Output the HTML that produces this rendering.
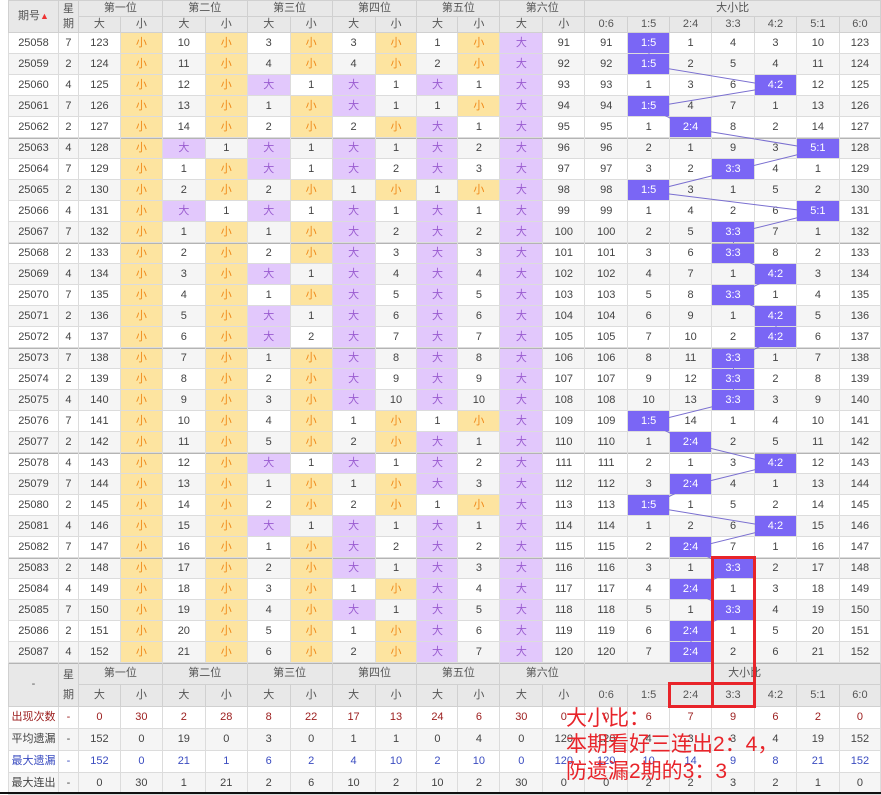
<!DOCTYPE html>
<html><head><meta charset="utf-8"><style>
*{box-sizing:border-box}
body{margin:0;background:#fff;width:881px;height:794px;overflow:hidden;position:relative;font-family:"Liberation Sans","Noto Sans CJK SC",sans-serif}
table{position:absolute;left:8px;top:0;border-collapse:collapse;table-layout:fixed;font-size:11px;color:#444}
td{border:1px solid #dcdcdc;text-align:center;padding:0;white-space:nowrap;overflow:hidden;line-height:13px}
tr{height:21px}
tr.g td{background:#f5f5f5}
thead td,.fh td{background:#e8e8e8;color:#555;border-color:#d0d0d0}
tr.h1{height:16px}tr.h2{height:16px}
tr.k td{box-shadow:inset 0 1px 0 #b4b4b4}
td.s{background:#fde4a0!important;color:#f08a1a}
td.b{background:#e2c8fc!important;color:#9a5cd0}
td.h{background:#7a66f5!important;color:#fff;position:relative;z-index:2}
.r1 td{color:#9b1c1c}
.r3 td{color:#3a4cc0}
.fh tr{height:22px}
svg{position:absolute;left:0;top:0;z-index:1}
.red{position:absolute;background:#e8242a;z-index:3}
.note{position:absolute;left:566px;color:#e8242a;font-size:21px;z-index:4;line-height:26px;font-family:"Liberation Sans","Noto Sans CJK SC",sans-serif}
.bar{position:absolute;left:0;top:792px;width:881px;height:2px;background:#111}
</style></head><body>
<table>
<colgroup><col style="width:50px"><col style="width:20px"><col style="width:42px"><col style="width:42px"><col style="width:43px"><col style="width:42px"><col style="width:43px"><col style="width:42px"><col style="width:43px"><col style="width:42px"><col style="width:41px"><col style="width:42px"><col style="width:43px"><col style="width:42px"><col style="width:43px"><col style="width:42px"><col style="width:42px"><col style="width:43px"><col style="width:42px"><col style="width:43px"><col style="width:41px"></colgroup>
<thead>
<tr class="h1"><td rowspan="2">期号<span style="color:#e33;font-size:9px">▲</span></td><td rowspan="2" style="line-height:15px">星<br>期</td><td colspan="2">第一位</td><td colspan="2">第二位</td><td colspan="2">第三位</td><td colspan="2">第四位</td><td colspan="2">第五位</td><td colspan="2">第六位</td><td colspan="7">大小比</td></tr>
<tr class="h2"><td>大</td><td>小</td><td>大</td><td>小</td><td>大</td><td>小</td><td>大</td><td>小</td><td>大</td><td>小</td><td>大</td><td>小</td><td>0:6</td><td>1:5</td><td>2:4</td><td>3:3</td><td>4:2</td><td>5:1</td><td>6:0</td></tr>
</thead>
<tbody>
<tr><td>25058</td><td>7</td><td>123</td><td class="s">小</td><td>10</td><td class="s">小</td><td>3</td><td class="s">小</td><td>3</td><td class="s">小</td><td>1</td><td class="s">小</td><td class="b">大</td><td>91</td><td>91</td><td class="h">1:5</td><td>1</td><td>4</td><td>3</td><td>10</td><td>123</td></tr>
<tr class="g"><td>25059</td><td>2</td><td>124</td><td class="s">小</td><td>11</td><td class="s">小</td><td>4</td><td class="s">小</td><td>4</td><td class="s">小</td><td>2</td><td class="s">小</td><td class="b">大</td><td>92</td><td>92</td><td class="h">1:5</td><td>2</td><td>5</td><td>4</td><td>11</td><td>124</td></tr>
<tr><td>25060</td><td>4</td><td>125</td><td class="s">小</td><td>12</td><td class="s">小</td><td class="b">大</td><td>1</td><td class="b">大</td><td>1</td><td class="b">大</td><td>1</td><td class="b">大</td><td>93</td><td>93</td><td>1</td><td>3</td><td>6</td><td class="h">4:2</td><td>12</td><td>125</td></tr>
<tr class="g"><td>25061</td><td>7</td><td>126</td><td class="s">小</td><td>13</td><td class="s">小</td><td>1</td><td class="s">小</td><td class="b">大</td><td>1</td><td>1</td><td class="s">小</td><td class="b">大</td><td>94</td><td>94</td><td class="h">1:5</td><td>4</td><td>7</td><td>1</td><td>13</td><td>126</td></tr>
<tr><td>25062</td><td>2</td><td>127</td><td class="s">小</td><td>14</td><td class="s">小</td><td>2</td><td class="s">小</td><td>2</td><td class="s">小</td><td class="b">大</td><td>1</td><td class="b">大</td><td>95</td><td>95</td><td>1</td><td class="h">2:4</td><td>8</td><td>2</td><td>14</td><td>127</td></tr>
<tr class="g k"><td>25063</td><td>4</td><td>128</td><td class="s">小</td><td class="b">大</td><td>1</td><td class="b">大</td><td>1</td><td class="b">大</td><td>1</td><td class="b">大</td><td>2</td><td class="b">大</td><td>96</td><td>96</td><td>2</td><td>1</td><td>9</td><td>3</td><td class="h">5:1</td><td>128</td></tr>
<tr><td>25064</td><td>7</td><td>129</td><td class="s">小</td><td>1</td><td class="s">小</td><td class="b">大</td><td>1</td><td class="b">大</td><td>2</td><td class="b">大</td><td>3</td><td class="b">大</td><td>97</td><td>97</td><td>3</td><td>2</td><td class="h">3:3</td><td>4</td><td>1</td><td>129</td></tr>
<tr class="g"><td>25065</td><td>2</td><td>130</td><td class="s">小</td><td>2</td><td class="s">小</td><td>2</td><td class="s">小</td><td>1</td><td class="s">小</td><td>1</td><td class="s">小</td><td class="b">大</td><td>98</td><td>98</td><td class="h">1:5</td><td>3</td><td>1</td><td>5</td><td>2</td><td>130</td></tr>
<tr><td>25066</td><td>4</td><td>131</td><td class="s">小</td><td class="b">大</td><td>1</td><td class="b">大</td><td>1</td><td class="b">大</td><td>1</td><td class="b">大</td><td>1</td><td class="b">大</td><td>99</td><td>99</td><td>1</td><td>4</td><td>2</td><td>6</td><td class="h">5:1</td><td>131</td></tr>
<tr class="g"><td>25067</td><td>7</td><td>132</td><td class="s">小</td><td>1</td><td class="s">小</td><td>1</td><td class="s">小</td><td class="b">大</td><td>2</td><td class="b">大</td><td>2</td><td class="b">大</td><td>100</td><td>100</td><td>2</td><td>5</td><td class="h">3:3</td><td>7</td><td>1</td><td>132</td></tr>
<tr class="k"><td>25068</td><td>2</td><td>133</td><td class="s">小</td><td>2</td><td class="s">小</td><td>2</td><td class="s">小</td><td class="b">大</td><td>3</td><td class="b">大</td><td>3</td><td class="b">大</td><td>101</td><td>101</td><td>3</td><td>6</td><td class="h">3:3</td><td>8</td><td>2</td><td>133</td></tr>
<tr class="g"><td>25069</td><td>4</td><td>134</td><td class="s">小</td><td>3</td><td class="s">小</td><td class="b">大</td><td>1</td><td class="b">大</td><td>4</td><td class="b">大</td><td>4</td><td class="b">大</td><td>102</td><td>102</td><td>4</td><td>7</td><td>1</td><td class="h">4:2</td><td>3</td><td>134</td></tr>
<tr><td>25070</td><td>7</td><td>135</td><td class="s">小</td><td>4</td><td class="s">小</td><td>1</td><td class="s">小</td><td class="b">大</td><td>5</td><td class="b">大</td><td>5</td><td class="b">大</td><td>103</td><td>103</td><td>5</td><td>8</td><td class="h">3:3</td><td>1</td><td>4</td><td>135</td></tr>
<tr class="g"><td>25071</td><td>2</td><td>136</td><td class="s">小</td><td>5</td><td class="s">小</td><td class="b">大</td><td>1</td><td class="b">大</td><td>6</td><td class="b">大</td><td>6</td><td class="b">大</td><td>104</td><td>104</td><td>6</td><td>9</td><td>1</td><td class="h">4:2</td><td>5</td><td>136</td></tr>
<tr><td>25072</td><td>4</td><td>137</td><td class="s">小</td><td>6</td><td class="s">小</td><td class="b">大</td><td>2</td><td class="b">大</td><td>7</td><td class="b">大</td><td>7</td><td class="b">大</td><td>105</td><td>105</td><td>7</td><td>10</td><td>2</td><td class="h">4:2</td><td>6</td><td>137</td></tr>
<tr class="g k"><td>25073</td><td>7</td><td>138</td><td class="s">小</td><td>7</td><td class="s">小</td><td>1</td><td class="s">小</td><td class="b">大</td><td>8</td><td class="b">大</td><td>8</td><td class="b">大</td><td>106</td><td>106</td><td>8</td><td>11</td><td class="h">3:3</td><td>1</td><td>7</td><td>138</td></tr>
<tr><td>25074</td><td>2</td><td>139</td><td class="s">小</td><td>8</td><td class="s">小</td><td>2</td><td class="s">小</td><td class="b">大</td><td>9</td><td class="b">大</td><td>9</td><td class="b">大</td><td>107</td><td>107</td><td>9</td><td>12</td><td class="h">3:3</td><td>2</td><td>8</td><td>139</td></tr>
<tr class="g"><td>25075</td><td>4</td><td>140</td><td class="s">小</td><td>9</td><td class="s">小</td><td>3</td><td class="s">小</td><td class="b">大</td><td>10</td><td class="b">大</td><td>10</td><td class="b">大</td><td>108</td><td>108</td><td>10</td><td>13</td><td class="h">3:3</td><td>3</td><td>9</td><td>140</td></tr>
<tr><td>25076</td><td>7</td><td>141</td><td class="s">小</td><td>10</td><td class="s">小</td><td>4</td><td class="s">小</td><td>1</td><td class="s">小</td><td>1</td><td class="s">小</td><td class="b">大</td><td>109</td><td>109</td><td class="h">1:5</td><td>14</td><td>1</td><td>4</td><td>10</td><td>141</td></tr>
<tr class="g"><td>25077</td><td>2</td><td>142</td><td class="s">小</td><td>11</td><td class="s">小</td><td>5</td><td class="s">小</td><td>2</td><td class="s">小</td><td class="b">大</td><td>1</td><td class="b">大</td><td>110</td><td>110</td><td>1</td><td class="h">2:4</td><td>2</td><td>5</td><td>11</td><td>142</td></tr>
<tr class="k"><td>25078</td><td>4</td><td>143</td><td class="s">小</td><td>12</td><td class="s">小</td><td class="b">大</td><td>1</td><td class="b">大</td><td>1</td><td class="b">大</td><td>2</td><td class="b">大</td><td>111</td><td>111</td><td>2</td><td>1</td><td>3</td><td class="h">4:2</td><td>12</td><td>143</td></tr>
<tr class="g"><td>25079</td><td>7</td><td>144</td><td class="s">小</td><td>13</td><td class="s">小</td><td>1</td><td class="s">小</td><td>1</td><td class="s">小</td><td class="b">大</td><td>3</td><td class="b">大</td><td>112</td><td>112</td><td>3</td><td class="h">2:4</td><td>4</td><td>1</td><td>13</td><td>144</td></tr>
<tr><td>25080</td><td>2</td><td>145</td><td class="s">小</td><td>14</td><td class="s">小</td><td>2</td><td class="s">小</td><td>2</td><td class="s">小</td><td>1</td><td class="s">小</td><td class="b">大</td><td>113</td><td>113</td><td class="h">1:5</td><td>1</td><td>5</td><td>2</td><td>14</td><td>145</td></tr>
<tr class="g"><td>25081</td><td>4</td><td>146</td><td class="s">小</td><td>15</td><td class="s">小</td><td class="b">大</td><td>1</td><td class="b">大</td><td>1</td><td class="b">大</td><td>1</td><td class="b">大</td><td>114</td><td>114</td><td>1</td><td>2</td><td>6</td><td class="h">4:2</td><td>15</td><td>146</td></tr>
<tr><td>25082</td><td>7</td><td>147</td><td class="s">小</td><td>16</td><td class="s">小</td><td>1</td><td class="s">小</td><td class="b">大</td><td>2</td><td class="b">大</td><td>2</td><td class="b">大</td><td>115</td><td>115</td><td>2</td><td class="h">2:4</td><td>7</td><td>1</td><td>16</td><td>147</td></tr>
<tr class="g k"><td>25083</td><td>2</td><td>148</td><td class="s">小</td><td>17</td><td class="s">小</td><td>2</td><td class="s">小</td><td class="b">大</td><td>1</td><td class="b">大</td><td>3</td><td class="b">大</td><td>116</td><td>116</td><td>3</td><td>1</td><td class="h">3:3</td><td>2</td><td>17</td><td>148</td></tr>
<tr><td>25084</td><td>4</td><td>149</td><td class="s">小</td><td>18</td><td class="s">小</td><td>3</td><td class="s">小</td><td>1</td><td class="s">小</td><td class="b">大</td><td>4</td><td class="b">大</td><td>117</td><td>117</td><td>4</td><td class="h">2:4</td><td>1</td><td>3</td><td>18</td><td>149</td></tr>
<tr class="g"><td>25085</td><td>7</td><td>150</td><td class="s">小</td><td>19</td><td class="s">小</td><td>4</td><td class="s">小</td><td class="b">大</td><td>1</td><td class="b">大</td><td>5</td><td class="b">大</td><td>118</td><td>118</td><td>5</td><td>1</td><td class="h">3:3</td><td>4</td><td>19</td><td>150</td></tr>
<tr><td>25086</td><td>2</td><td>151</td><td class="s">小</td><td>20</td><td class="s">小</td><td>5</td><td class="s">小</td><td>1</td><td class="s">小</td><td class="b">大</td><td>6</td><td class="b">大</td><td>119</td><td>119</td><td>6</td><td class="h">2:4</td><td>1</td><td>5</td><td>20</td><td>151</td></tr>
<tr class="g"><td>25087</td><td>4</td><td>152</td><td class="s">小</td><td>21</td><td class="s">小</td><td>6</td><td class="s">小</td><td>2</td><td class="s">小</td><td class="b">大</td><td>7</td><td class="b">大</td><td>120</td><td>120</td><td>7</td><td class="h">2:4</td><td>2</td><td>6</td><td>21</td><td>152</td></tr>
</tbody>
<tbody class="fh">
<tr class="k"><td rowspan="2">-</td><td rowspan="2" style="line-height:20px">星<br>期</td><td colspan="2">第一位</td><td colspan="2">第二位</td><td colspan="2">第三位</td><td colspan="2">第四位</td><td colspan="2">第五位</td><td colspan="2">第六位</td><td colspan="7" style="padding-left:24px">大小比</td></tr>
<tr><td>大</td><td>小</td><td>大</td><td>小</td><td>大</td><td>小</td><td>大</td><td>小</td><td>大</td><td>小</td><td>大</td><td>小</td><td>0:6</td><td>1:5</td><td>2:4</td><td>3:3</td><td>4:2</td><td>5:1</td><td>6:0</td></tr>
</tbody>
<tbody>
<tr class="r1" style="height:22px"><td>出现次数</td><td>-</td><td>0</td><td>30</td><td>2</td><td>28</td><td>8</td><td>22</td><td>17</td><td>13</td><td>24</td><td>6</td><td>30</td><td>0</td><td>0</td><td>6</td><td>7</td><td>9</td><td>6</td><td>2</td><td>0</td></tr>
<tr class="g" style="height:22px"><td>平均遗漏</td><td>-</td><td>152</td><td>0</td><td>19</td><td>0</td><td>3</td><td>0</td><td>1</td><td>1</td><td>0</td><td>4</td><td>0</td><td>120</td><td>120</td><td>4</td><td>3</td><td>3</td><td>4</td><td>19</td><td>152</td></tr>
<tr class="r3" style="height:22px"><td>最大遗漏</td><td>-</td><td>152</td><td>0</td><td>21</td><td>1</td><td>6</td><td>2</td><td>4</td><td>10</td><td>2</td><td>10</td><td>0</td><td>120</td><td>120</td><td>10</td><td>14</td><td>9</td><td>8</td><td>21</td><td>152</td></tr>
<tr class="g" style="height:22px"><td>最大连出</td><td>-</td><td>0</td><td>30</td><td>1</td><td>21</td><td>2</td><td>6</td><td>10</td><td>2</td><td>10</td><td>2</td><td>30</td><td>0</td><td>0</td><td>2</td><td>2</td><td>3</td><td>2</td><td>1</td><td>0</td></tr>
</tbody>
</table>
<svg width="881" height="794"><polyline fill="none" stroke="#7a6fd0" stroke-width="1" points="649,44.5 649,65.5 776,86.5 649,107.5 691,128.5 818.5,149.5 733.5,170.5 649,191.5 818.5,212.5 733.5,233.5 733.5,254.5 776,275.5 733.5,296.5 776,317.5 776,338.5 733.5,359.5 733.5,380.5 733.5,401.5 649,422.5 691,443.5 776,464.5 691,485.5 649,506.5 776,527.5 691,548.5 733.5,569.5 691,590.5 733.5,611.5 691,632.5 691,653.5"/></svg>
<div class="red" style="left:711px;top:556px;width:45px;height:3px"></div>
<div class="red" style="left:711px;top:556px;width:3px;height:152px"></div>
<div class="red" style="left:753px;top:556px;width:3px;height:152px"></div>
<div class="red" style="left:668px;top:682px;width:88px;height:3px"></div>
<div class="red" style="left:668px;top:682px;width:3px;height:26px"></div>
<div class="red" style="left:668px;top:705px;width:88px;height:3px"></div>
<div class="note" style="top:706px">大小比：</div>
<div class="note" style="top:732px">本期看好三连出2：4，</div>
<div class="note" style="top:759px">防遗漏2期的3：3</div>
<div class="bar"></div>
</body></html>
